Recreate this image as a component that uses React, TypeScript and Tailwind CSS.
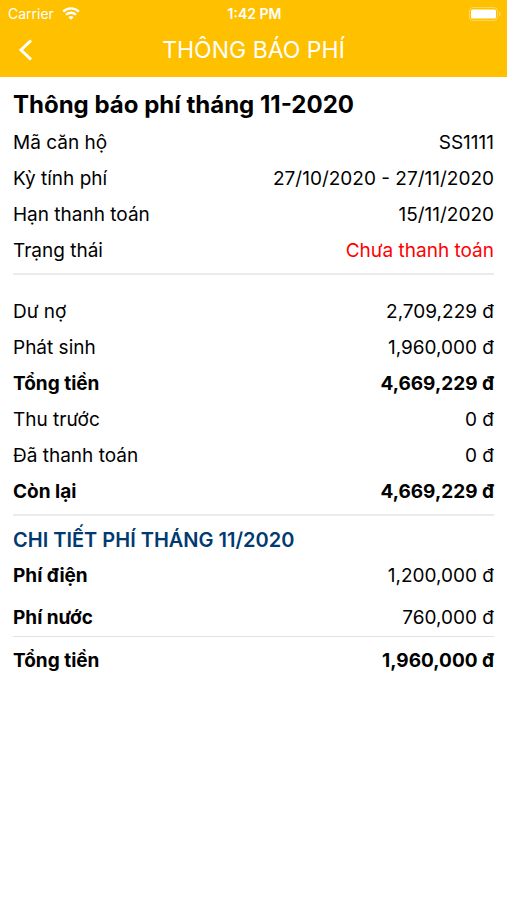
import React from 'react';

type FeeRow = {
  label: string;
  value: string;
  bold?: boolean;
  alert?: boolean;
};

const infoRows: FeeRow[] = [
  { label: 'Mã căn hộ', value: 'SS1111' },
  { label: 'Kỳ tính phí', value: '27/10/2020 - 27/11/2020' },
  { label: 'Hạn thanh toán', value: '15/11/2020' },
  { label: 'Trạng thái', value: 'Chưa thanh toán', alert: true },
];

const balanceRows: FeeRow[] = [
  { label: 'Dư nợ', value: '2,709,229 đ' },
  { label: 'Phát sinh', value: '1,960,000 đ' },
  { label: 'Tổng tiền', value: '4,669,229 đ', bold: true },
  { label: 'Thu trước', value: '0 đ' },
  { label: 'Đã thanh toán', value: '0 đ' },
  { label: 'Còn lại', value: '4,669,229 đ', bold: true },
];

const StatusBar = () => (
  <div className="grid grid-cols-[1fr_auto_1fr] items-center h-7 pl-2 pr-1.5 text-sm">
    <div className="flex items-center gap-2">
      <span>Carrier</span>
      <svg width="18" height="14" viewBox="0 0 18 14" fill="none" stroke="currentColor" strokeWidth="2.3" aria-hidden="true">
        <path d="M1.2 4.6a11 11 0 0 1 15.6 0" />
        <path d="M4 7.8a7.1 7.1 0 0 1 10 0" />
        <path d="M9 12.8 6.4 10.2a3.7 3.7 0 0 1 5.2 0z" fill="currentColor" stroke="none" />
      </svg>
    </div>
    <span className="font-semibold">1:42 PM</span>
    <svg className="justify-self-end" width="32" height="14" viewBox="0 0 32 14" aria-hidden="true">
      <rect x="0.5" y="0.5" width="28" height="13" rx="3.5" fill="none" stroke="#fff" strokeOpacity="0.35" />
      <rect x="2" y="2.5" width="25" height="9" rx="1.5" fill="#fff" />
      <path d="M30 4.5c2 .8 2 4.2 0 5z" fill="#fff" fillOpacity="0.4" />
    </svg>
  </div>
);

const Header = () => (
  <header className="bg-[#ffc000] text-white pb-1.5">
    <StatusBar />
    <div className="grid grid-cols-[48px_1fr_48px] items-center h-[43px]">
      <button type="button" aria-label="Quay lại" className="flex items-center h-full pl-4">
        <svg width="18" height="24" viewBox="0 0 18 24" fill="none" stroke="currentColor" strokeWidth="3" aria-hidden="true">
          <path d="M15 2.5 5 12l10 9.5" />
        </svg>
      </button>
      <h1 className="text-center text-[23px] leading-7">THÔNG BÁO PHÍ</h1>
    </div>
  </header>
);

const Row = ({ label, value, bold, alert }: FeeRow) => (
  <div className={`flex justify-between items-center h-9 ${bold ? 'font-bold' : ''}`}>
    <dt>{label}</dt>
    <dd className={alert ? 'text-[#ff0000]' : ''}>{value}</dd>
  </div>
);

export default function App() {
  return (
    <div className="min-h-screen bg-white text-black text-[19px] leading-6 font-['Inter','Liberation_Sans',sans-serif]">
      <Header />
      <main className="px-[13px] pt-3">
        <h2 className="text-2xl leading-8 font-bold">Thông báo phí tháng 11-2020</h2>
        <dl className="border-b-2 border-[#ebebeb] pt-1 pb-1">
          {infoRows.map((row) => (
            <Row key={row.label} {...row} />
          ))}
        </dl>
        <dl className="border-b-2 border-[#ebebeb] pt-[19px] pb-1">
          {balanceRows.map((row) => (
            <Row key={row.label} {...row} />
          ))}
        </dl>
        <section className="pt-1.5">
          <h3 className="h-9 flex items-center text-xl font-semibold text-[#003a70]">CHI TIẾT PHÍ THÁNG 11/2020</h3>
          <dl>
            <div className="flex justify-between items-center h-9">
              <dt className="font-bold">Phí điện</dt>
              <dd>1,200,000 đ</dd>
            </div>
            <div className="flex justify-between items-end h-[43px] pb-1.5 border-b border-[#e2e2e2]">
              <dt className="font-bold">Phí nước</dt>
              <dd>760,000 đ</dd>
            </div>
            <div className="flex justify-between items-center h-12 font-bold">
              <dt>Tổng tiền</dt>
              <dd>1,960,000 đ</dd>
            </div>
          </dl>
        </section>
      </main>
    </div>
  );
}
